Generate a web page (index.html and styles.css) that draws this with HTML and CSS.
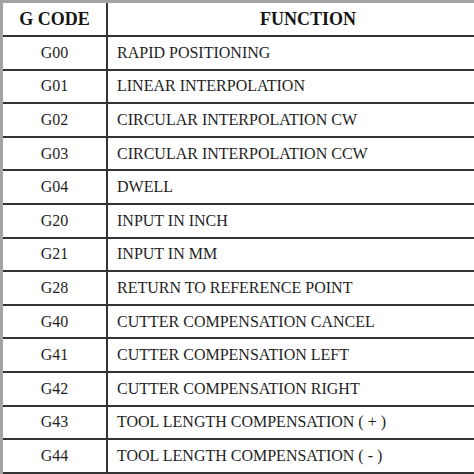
FILE: index.html
```html
<!DOCTYPE html>
<html>
<head>
<meta charset="utf-8">
<link rel="stylesheet" href="styles.css">
</head>
<body>
<div class="sheet">
<table class="codes">
<colgroup><col class="c-code"><col class="c-func"></colgroup>
<thead>
<tr class="head"><th>G CODE</th><th>FUNCTION</th></tr>
</thead>
<tbody>
<tr><td class="code">G00</td><td class="func">RAPID POSITIONING</td></tr>
<tr><td class="code">G01</td><td class="func">LINEAR INTERPOLATION</td></tr>
<tr><td class="code">G02</td><td class="func">CIRCULAR INTERPOLATION CW</td></tr>
<tr><td class="code">G03</td><td class="func">CIRCULAR INTERPOLATION CCW</td></tr>
<tr><td class="code">G04</td><td class="func">DWELL</td></tr>
<tr><td class="code">G20</td><td class="func">INPUT IN INCH</td></tr>
<tr><td class="code">G21</td><td class="func">INPUT IN MM</td></tr>
<tr><td class="code">G28</td><td class="func">RETURN TO REFERENCE POINT</td></tr>
<tr><td class="code">G40</td><td class="func">CUTTER COMPENSATION CANCEL</td></tr>
<tr><td class="code">G41</td><td class="func">CUTTER COMPENSATION LEFT</td></tr>
<tr><td class="code">G42</td><td class="func">CUTTER COMPENSATION RIGHT</td></tr>
<tr><td class="code">G43</td><td class="func">TOOL LENGTH COMPENSATION ( + )</td></tr>
<tr><td class="code">G44</td><td class="func">TOOL LENGTH COMPENSATION ( - )</td></tr>
</tbody>
</table>
</div>
</body>
</html>
```
FILE: styles.css
```css
html, body {
  margin: 0;
  padding: 0;
  background: #ffffff;
  overflow: hidden;
}
.sheet {
  width: 471px;
  overflow: hidden;
  background: #a3a3a3;
  padding: 3px 0 4px 3px;
}
.codes {
  border-collapse: collapse;
  table-layout: fixed;
  width: 505px;
  background: #ffffff;
  font-family: "Liberation Serif", "Times New Roman", serif;
  color: #1e1e1e;
}
.c-code { width: 104px; }
.codes th, .codes td {
  padding: 0;
  border-bottom: 2px solid #333333;
  vertical-align: middle;
}
.codes th:first-child, .codes td.code {
  border-right: 2px solid #333333;
}
.head th {
  height: 32px;
  font-size: 18px;
  font-weight: bold;
  text-align: center;
  color: #151515;
}
.codes tbody tr {
  height: 33.6px;
}
.code {
  text-align: center;
  font-size: 16px;
}
.func {
  text-align: left;
  font-size: 16px;
  padding-left: 9px !important;
}
```
